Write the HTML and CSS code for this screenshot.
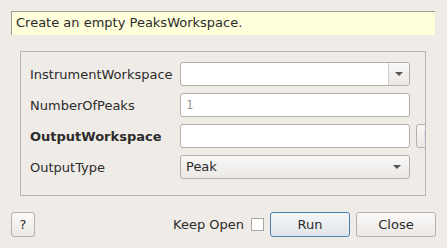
FILE: index.html
```html
<!DOCTYPE html>
<html lang="en">
<head>
  <meta charset="UTF-8">
  <title>CreatePeaksWorkspace</title>
  <link rel="stylesheet" href="styles.css">
</head>
<body>

  <!-- Algorithm description -->
  <div class="description">Create an empty PeaksWorkspace.</div>

  <!-- Property grid -->
  <div class="group-box">
    <div class="prop-grid">
      <label class="prop-label">InstrumentWorkspace</label>
      <div class="combo editable">
        <span class="combo-text"></span>
        <span class="combo-btn"><span class="arrow"></span></span>
      </div>
      <span class="side-btn"></span>

      <label class="prop-label">NumberOfPeaks</label>
      <div class="line-edit placeholder">1</div>
      <span></span>

      <label class="prop-label bold">OutputWorkspace</label>
      <div class="line-edit"></div>
      <span class="side-btn visible"><span class="side-tint"></span></span>

      <label class="prop-label">OutputType</label>
      <div class="combo">
        <span class="combo-text">Peak</span>
        <span class="combo-arrow"><span class="arrow"></span></span>
      </div>
      <span></span>
    </div>
  </div>

  <!-- Dialog buttons -->
  <div class="button-row">
    <button class="btn help-btn">?</button>
    <div class="spacer"></div>
    <span class="keep-open">Keep Open</span>
    <span class="checkbox"></span>
    <button class="btn run-btn">Run</button>
    <button class="btn close-btn">Close</button>
  </div>

</body>
</html>
```

FILE: styles.css
```css
body {
  margin: 0;
  width: 447px;
  height: 248px;
  overflow: hidden;
  background-color: #efebe7;
  font-family: 'DejaVu Sans', sans-serif;
  font-size: 13px;
  color: #2b2b2b;
  display: flex;
  flex-direction: column;
}

.description {
  margin: 11px 12px 0 11px;
  height: 24px;
  box-sizing: border-box;
  border-top: 1px solid #a19d99;
  border-left: 1px solid #a19d99;
  background-color: #ffffdc;
  padding-left: 4px;
  line-height: 22px;
}

.group-box {
  margin: 16px 0 0 20px;
  width: 406px;
  height: 145px;
  box-sizing: border-box;
  border: 1px solid #b9b5b1;
  padding: 10px 0 0 9px;
  overflow: hidden;
}

.prop-grid {
  display: grid;
  grid-template-columns: 144px 230px 20px;
  grid-auto-rows: 24px;
  column-gap: 6px;
  row-gap: 7px;
  align-items: center;
}

.prop-label {
  white-space: nowrap;
}

.bold {
  font-weight: bold;
}

.line-edit, .combo {
  height: 24px;
  box-sizing: border-box;
  border: 1px solid #b3afab;
  border-radius: 3px;
  background-color: #ffffff;
  padding-left: 5px;
  line-height: 22px;
}

.placeholder {
  color: #9a9a9a;
  font-family: 'DejaVu Sans Mono', monospace;
  font-size: 12px;
}

.combo {
  display: flex;
  padding-left: 0;
}

.combo-text {
  flex: 1;
  padding-left: 5px;
}

.combo:not(.editable) {
  background: linear-gradient(#f9f8f7, #ebe8e5);
}

.combo-btn {
  width: 20px;
  border-left: 1px solid #cdc9c5;
  background: linear-gradient(#f9f8f7, #ebe8e5);
  border-radius: 0 2px 2px 0;
  display: flex;
  justify-content: center;
  align-items: center;
}

.combo-arrow {
  width: 20px;
  margin-right: 2px;
  display: flex;
  justify-content: center;
  align-items: center;
}

.arrow {
  width: 0;
  height: 0;
  border-left: 4px solid transparent;
  border-right: 4px solid transparent;
  border-top: 4px solid #555555;
}

.side-btn {
  height: 24px;
}

.side-btn.visible {
  box-sizing: border-box;
  border: 1px solid #b3afab;
  border-radius: 3px;
  background: linear-gradient(#f9f8f7, #ebe8e5);
  padding: 5px 0 0 7px;
}

.side-tint {
  display: block;
  width: 3px;
  height: 12px;
  background-color: #dcdcf4;
}

.button-row {
  display: flex;
  align-items: center;
  margin: 16px 11px 0 11px;
  height: 25px;
}

.spacer {
  flex: 1;
}

.btn {
  height: 25px;
  box-sizing: border-box;
  border: 1px solid #b3afab;
  border-radius: 3px;
  background: linear-gradient(#fbfaf9, #ebe8e5);
  font-family: 'DejaVu Sans', sans-serif;
  font-size: 13px;
  color: #2b2b2b;
  padding: 0;
}

.help-btn {
  width: 24px;
}

.keep-open {
  margin-right: 7px;
}

.checkbox {
  width: 13px;
  height: 13px;
  box-sizing: border-box;
  border: 1px solid #aaa6a2;
  background-color: #ffffff;
  margin-right: 6px;
}

.run-btn {
  width: 80px;
  margin-right: 6px;
  border-color: #4b82b4;
  background: linear-gradient(#f4f6f8, #e1e5e9);
}

.close-btn {
  width: 80px;
}
```
